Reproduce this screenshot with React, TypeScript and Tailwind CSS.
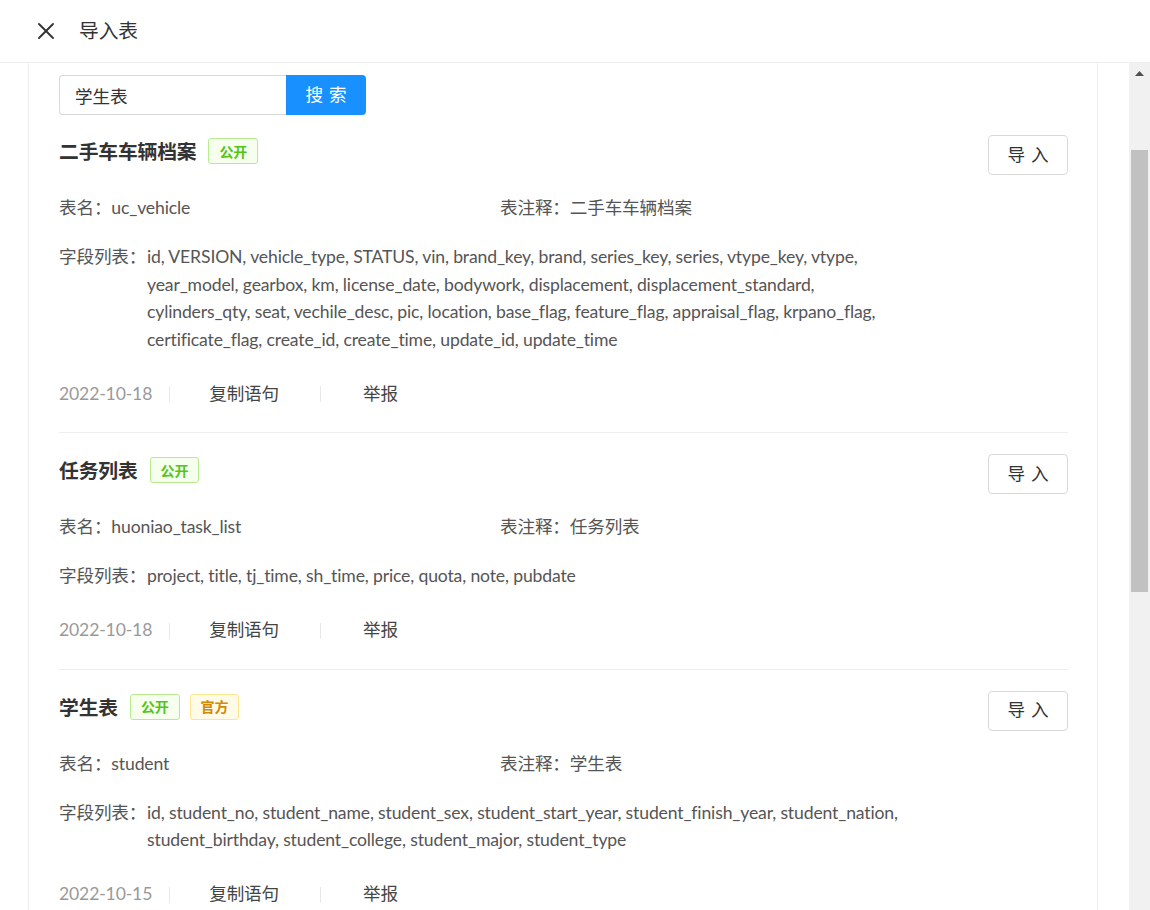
import { X } from "lucide-react";

type Table = {
    title: string;
    badges: ("public" | "official")[];
    name: string;
    comment: string;
    fields: string[];
    date: string;
};

const tables: Table[] = [
    {
        title: "二手车车辆档案",
        badges: ["public"],
        name: "uc_vehicle",
        comment: "二手车车辆档案",
        fields: [
            "id, VERSION, vehicle_type, STATUS, vin, brand_key, brand, series_key, series, vtype_key, vtype,",
            "year_model, gearbox, km, license_date, bodywork, displacement, displacement_standard,",
            "cylinders_qty, seat, vechile_desc, pic, location, base_flag, feature_flag, appraisal_flag, krpano_flag,",
            "certificate_flag, create_id, create_time, update_id, update_time",
        ],
        date: "2022-10-18",
    },
    {
        title: "任务列表",
        badges: ["public"],
        name: "huoniao_task_list",
        comment: "任务列表",
        fields: ["project, title, tj_time, sh_time, price, quota, note, pubdate"],
        date: "2022-10-18",
    },
    {
        title: "学生表",
        badges: ["public", "official"],
        name: "student",
        comment: "学生表",
        fields: [
            "id, student_no, student_name, student_sex, student_start_year, student_finish_year, student_nation,",
            "student_birthday, student_college, student_major, student_type",
        ],
        date: "2022-10-15",
    },
];

function Badge({ kind }: { kind: "public" | "official" }) {
    if (kind === "official") {
        return (
            <span className="flex items-center h-[26px] px-[10px] rounded-[3px] border border-[#ffe58f] bg-[#fffbe6] text-[#d48806] text-[14px] font-bold">
                官方
            </span>
        );
    }
    return (
        <span className="flex items-center h-[26px] px-[10px] rounded-[3px] border border-[#b7eb8f] bg-[#f6ffed] text-[#52c41a] text-[14px] font-bold">
            公开
        </span>
    );
}

function TableCard({ table, first }: { table: Table; first: boolean }) {
    return (
        <div className={`${first ? "pt-[20px]" : "pt-[21px]"} pb-[24px] border-b border-[#eeeeee]`}>
            {/* Title row */}
            <div className="flex justify-between items-start">
                <div className="flex items-center gap-[10px]">
                    <span className="mr-[2px] text-[19.8px] font-bold leading-[32px] text-[#333]">{table.title}</span>
                    {table.badges.map((b) => (
                        <Badge key={b} kind={b} />
                    ))}
                </div>
                <button className="w-[80px] h-[40px] border border-[#d9d9d9] rounded-[4px] bg-white text-[17.6px] text-[#333] tracking-[0.34em] indent-[0.34em]">
                    导入
                </button>
            </div>

            {/* Name / comment */}
            <div className="mt-[19px] grid grid-cols-2 w-[882px] leading-[28px] text-[#555]">
                <div>表名：{table.name}</div>
                <div>表注释：{table.comment}</div>
            </div>

            {/* Fields */}
            <div className="mt-[21px] flex leading-[27.5px] text-[#555]">
                <span className="w-[88px] shrink-0">字段列表：</span>
                <div>
                    {table.fields.map((line) => (
                        <div key={line} className="whitespace-nowrap">{line}</div>
                    ))}
                </div>
            </div>

            {/* Footer */}
            <div className="mt-[27px] h-[28px] flex items-center">
                <span className="text-[#999]">{table.date}</span>
                <span className="ml-[17px] w-px h-[16px] bg-[#e8e8e8]" />
                <span className="ml-[39px] mr-[41px] text-[#444]">复制语句</span>
                <span className="w-px h-[16px] bg-[#e8e8e8]" />
                <span className="ml-[42px] text-[#444]">举报</span>
            </div>
        </div>
    );
}

export default function App() {
    return (
        <div
            className="w-[1150px] h-[910px] overflow-hidden bg-white flex flex-col text-[17.6px] tracking-[-0.15px]"
            style={{ fontFamily: '"Lato", "Noto Sans CJK SC", sans-serif' }}
        >
            {/* Header */}
            <div className="h-[63px] shrink-0 flex items-center pl-[32px] pb-[1px] border-b border-[#eeeeee]">
                <X size={28} strokeWidth={1.6} className="text-[#333]" />
                <span className="ml-[19px] text-[19.8px] text-[#333]">导入表</span>
            </div>

            <div className="flex-1 flex min-h-0">
                {/* Scroll area */}
                <div className="flex-1 overflow-hidden pl-[28px] pr-[31px]">
                    <div className="h-full border-l border-r border-[#eeeeee] pl-[30px] pr-[29px] pt-[12px]">
                        {/* Search */}
                        <div className="flex">
                            <input
                                className="w-[227px] h-[40px] border border-[#d9d9d9] border-r-0 rounded-l-[4px] pl-[15px] text-[#333] outline-none"
                                defaultValue="学生表"
                            />
                            <button className="w-[80px] h-[40px] bg-[#1890ff] text-white rounded-r-[4px] tracking-[0.34em] indent-[0.34em]">
                                搜索
                            </button>
                        </div>

                        <div>
                            {tables.map((t, i) => (
                                <TableCard key={t.name} table={t} first={i === 0} />
                            ))}
                        </div>
                    </div>
                </div>

                {/* Scrollbar */}
                <div className="w-[21px] shrink-0 bg-[#f1f1f1] flex flex-col items-center">
                    <div className="h-[20px] w-full flex items-center justify-center">
                        <svg width="9" height="5" viewBox="0 0 9 5">
                            <path d="M4.5 0 L9 5 L0 5 Z" fill="#505050" />
                        </svg>
                    </div>
                    <div className="mt-[67px] w-[17px] h-[442px] bg-[#c1c1c1]" />
                </div>
            </div>
        </div>
    );
}
